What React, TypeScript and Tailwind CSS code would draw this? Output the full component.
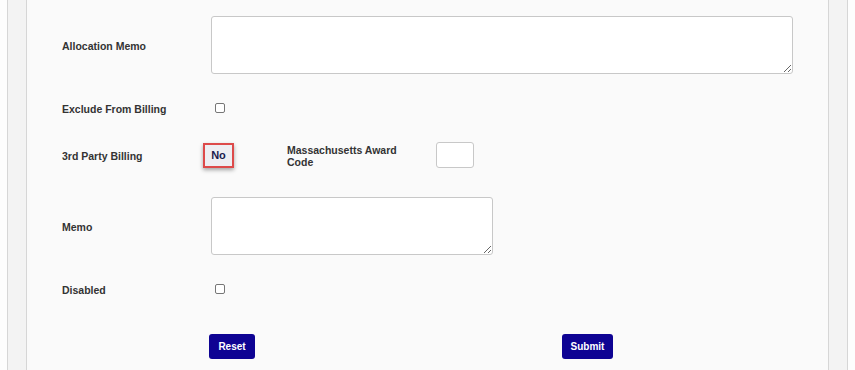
const labelCls = 'w-[149px] shrink-0 pt-[1px] text-[10.5px] font-bold leading-[12px] text-[#333]';

const Checkbox = () => (
  <input
    type="checkbox"
    className="ml-[4px] h-[10px] w-[10px] appearance-none rounded-[2px] border border-[#767676] bg-white"
  />
);

const App = () => {
  return (
    <div
      className="min-h-screen bg-[#fdfdfd] pl-[7px]"
      style={{ fontFamily: '"Liberation Sans", Arial, sans-serif' }}
    >
      <div className="min-h-screen w-[841px] border-x border-[#d6d6d6] bg-[#f3f3f3] px-[18px]">
        <div className="min-h-screen border-x border-[#d6d6d6] bg-[#fafafa] px-[35px] pt-[16px] pb-[20px]">
          {/* Allocation memo */}
          <div className="flex items-center">
            <label className={labelCls}>Allocation Memo</label>
            <textarea className="h-[58px] flex-1 rounded-[3px] border border-[#c8c8c8] bg-white" />
          </div>

          {/* Exclude from billing */}
          <div className="mt-[24px] flex h-[20px] items-center">
            <label className={labelCls}>Exclude From Billing</label>
            <Checkbox />
          </div>

          {/* 3rd party billing */}
          <div className="mt-[23px] flex h-[28px] items-center">
            <label className={labelCls}>3rd Party Billing</label>
            <div className="w-[76px] shrink-0">
              <button className="-ml-[8px] flex h-[25px] w-[31px] items-center justify-center border-2 border-[#dd4a4a] bg-[#eeeef2] text-[11px] font-bold text-[#1b1b4d] shadow-[0_2px_4px_rgba(0,0,0,0.35)]">
                No
              </button>
            </div>
            <label className={`${labelCls} pr-[30px]`}>Massachusetts Award Code</label>
            <input
              type="text"
              className="h-[26px] w-[38px] rounded-[3px] border border-[#c8c8c8] bg-white"
            />
          </div>

          {/* Memo */}
          <div className="mt-[28px] flex items-center">
            <label className={labelCls}>Memo</label>
            <textarea className="h-[58px] w-[282px] rounded-[3px] border border-[#c8c8c8] bg-white" />
          </div>

          {/* Disabled */}
          <div className="mt-[24px] flex h-[20px] items-center">
            <label className={labelCls}>Disabled</label>
            <Checkbox />
          </div>

          {/* Actions */}
          <div className="mt-[35px] flex items-center">
            <button className="ml-[147px] h-[25px] w-[46px] rounded-[3px] bg-[#0e0393] text-[10px] font-bold text-white">
              Reset
            </button>
            <button className="ml-[307px] h-[25px] w-[51px] rounded-[3px] bg-[#0e0393] text-[10px] font-bold text-white">
              Submit
            </button>
          </div>
        </div>
      </div>
    </div>
  );
};

export default App;
